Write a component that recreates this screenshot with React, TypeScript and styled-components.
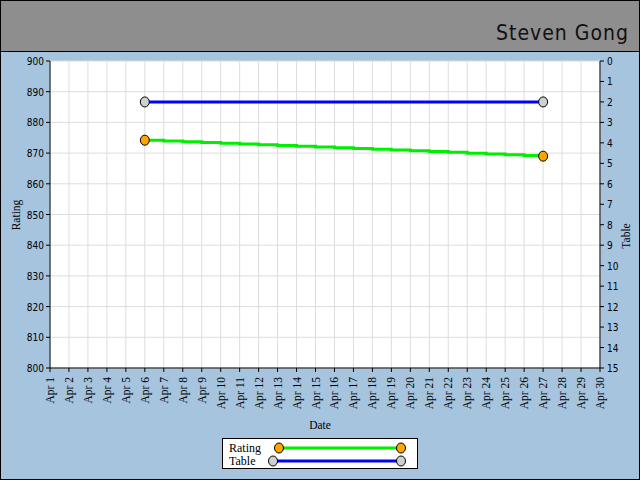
import styled, { createGlobalStyle } from 'styled-components';

const Global = createGlobalStyle`
  body { margin: 0; font-family: "Liberation Serif", serif; }
`;

const Page = styled.div`
  width: 640px;
  height: 480px;
  display: flex;
  flex-direction: column;
  box-sizing: border-box;
`;

const Header = styled.div`
  height: 52px;
  background: #8e8e8e;
  border: 1px solid #000;
  box-sizing: border-box;
  display: flex;
  align-items: flex-end;
  justify-content: flex-end;
  padding: 0 10px 6px 0;
  font-family: "DejaVu Sans Condensed", "DejaVu Sans", sans-serif;
  font-size: 21px;
  font-weight: 200;
  letter-spacing: 1px;
  color: #111;
`;

const Body = styled.div`
  flex: 1;
  background: #a6c4de;
  border: 1px solid #000;
  border-top: none;
  display: flex;
  flex-direction: column;
  align-items: center;
`;

const Chart = styled.svg`
  display: block;
`;

const Legend = styled.div`
  margin-top: 5px;
  width: 196px;
  height: 31px;
  box-sizing: border-box;
  background: #fff;
  border: 1px solid #000;
  padding: 2px 0 0 6px;
  display: flex;
  flex-direction: column;
  font-size: 12px;
  line-height: 12px;
`;

const LegendRow = styled.div`
  display: flex;
  align-items: center;
  height: 13px;
`;

const LegendLabel = styled.span`
  width: 38px;
  flex: none;
`;

const x = (d: number) => 50 + (d - 1) * (550 / 29);
const yR = (r: number) => 61 + (900 - r) * 3.07;
const yT = (t: number) => 61 + t * (307 / 15);

const greenPts: string[] = [];
for (let d = 6; d <= 27; d++) {
  const r = 874.2 - ((d - 6) * 5.2) / 21;
  greenPts.push(`${x(d)},${yR(r)}`, `${x(d + 1 > 27 ? 27 : d + 1)},${yR(r)}`);
}

function LegendSwatch({ color, fill, off, len }: { color: string; fill: string; off: number; len: number }) {
  return (
    <svg width={len + 12} height={12} style={{ marginLeft: off, flex: 'none' }}>
      <line x1={6} y1={6} x2={6 + len} y2={6} stroke={color} strokeWidth={3} />
      <ellipse cx={6} cy={6} rx={4.5} ry={5} fill={fill} stroke="#000" />
      <ellipse cx={6 + len} cy={6} rx={4.5} ry={5} fill={fill} stroke="#000" />
    </svg>
  );
}

export default function App() {
  const days = Array.from({ length: 30 }, (_, i) => i + 1);
  const ratings = Array.from({ length: 11 }, (_, i) => 800 + i * 10);
  const tables = Array.from({ length: 16 }, (_, i) => i);
  return (
    <Page>
      <Global />
      <Header>Steven Gong</Header>
      <Body>
        <Chart width={638} height={381} viewBox="1 52 638 381">
          <rect x={50} y={61} width={550} height={307} fill="#fff" />
          {days.map((d) => (
            <line key={d} x1={x(d)} y1={61} x2={x(d)} y2={368} stroke="#ddd" />
          ))}
          {ratings.map((r) => (
            <line key={r} x1={50} y1={yR(r)} x2={600} y2={yR(r)} stroke="#ddd" />
          ))}
          <line x1={50} y1={61} x2={50} y2={368} stroke="#000" />
          <line x1={600} y1={61} x2={600} y2={368} stroke="#000" />
          <line x1={50} y1={368} x2={600} y2={368} stroke="#000" />
          <g fontFamily="'DejaVu Sans Condensed', sans-serif" fontSize={10}>
            {ratings.map((r) => (
              <g key={r}>
                <line x1={46} y1={yR(r)} x2={50} y2={yR(r)} stroke="#000" />
                <text x={44} y={yR(r) + 4} textAnchor="end">{r}</text>
              </g>
            ))}
            {tables.map((t) => (
              <g key={t}>
                <line x1={600} y1={yT(t)} x2={604} y2={yT(t)} stroke="#000" />
                <text x={607} y={yT(t) + 4}>{t}</text>
              </g>
            ))}
          </g>
          <g fontFamily="'Liberation Serif', serif" fontSize={11.5}>
            {days.map((d) => (
              <g key={d}>
                <line x1={x(d)} y1={368} x2={x(d)} y2={372} stroke="#000" />
                <text transform={`translate(${x(d) + 4},377) rotate(-90)`} textAnchor="end">Apr {d}</text>
              </g>
            ))}
            <text x={320} y={429} textAnchor="middle">Date</text>
            <text transform="translate(20,215) rotate(-90)" textAnchor="middle">Rating</text>
            <text transform="translate(630,236) rotate(-90)" textAnchor="middle">Table</text>
          </g>
          <line x1={x(6)} y1={yT(2)} x2={x(27)} y2={yT(2)} stroke="#0000ff" strokeWidth={3} />
          <polyline points={greenPts.join(' ')} fill="none" stroke="#00ee00" strokeWidth={3} />
          <ellipse cx={x(6)} cy={yT(2)} rx={4.5} ry={5} fill="#d0d0d0" stroke="#000" />
          <ellipse cx={x(27)} cy={yT(2)} rx={4.5} ry={5} fill="#d0d0d0" stroke="#000" />
          <ellipse cx={x(6)} cy={yR(874.2)} rx={4.5} ry={5} fill="#ffa500" stroke="#000" />
          <ellipse cx={x(27)} cy={yR(869)} rx={4.5} ry={5} fill="#ffa500" stroke="#000" />
        </Chart>
        <Legend>
          <LegendRow>
            <LegendLabel>Rating</LegendLabel>
            <LegendSwatch color="#00ee00" fill="#ffa500" off={6} len={122} />
          </LegendRow>
          <LegendRow>
            <LegendLabel>Table</LegendLabel>
            <LegendSwatch color="#0000ff" fill="#d0d0d0" off={0} len={128} />
          </LegendRow>
        </Legend>
      </Body>
    </Page>
  );
}
